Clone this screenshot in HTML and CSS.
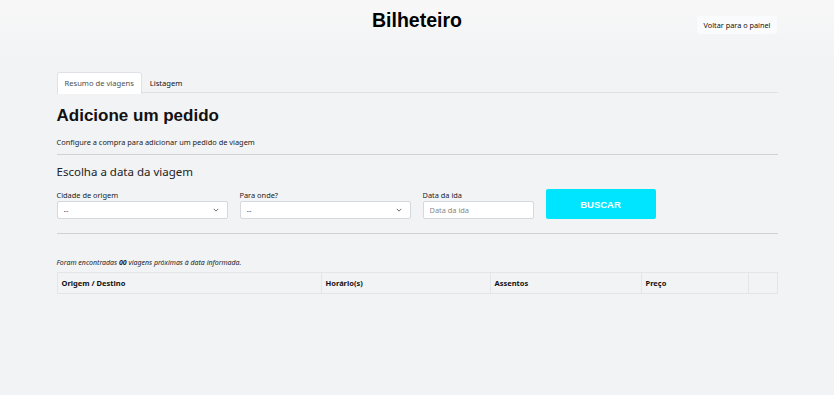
FILE: index.html
```html
<!DOCTYPE html>
<html lang="pt-BR">
<head>
  <meta charset="UTF-8" />
  <meta name="viewport" content="width=device-width, initial-scale=1.0" />
  <title>Bilheteiro</title>
  <link rel="stylesheet" href="styles.css">
</head>
<body>
  <header class="topo">
    <h1 class="marca">Bilheteiro</h1>
    <a class="voltar" href="#">Voltar para o painel</a>
  </header>

  <main class="container">
    <nav class="abas">
      <a class="aba ativa" href="#">Resumo de viagens</a>
      <a class="aba" href="#">Listagem</a>
    </nav>

    <h2 class="titulo">Adicione um pedido</h2>
    <p class="descricao">Configure a compra para adicionar um pedido de viagem</p>
    <hr class="divisor" />

    <h3 class="subtitulo">Escolha a data da viagem</h3>
    <form class="busca">
      <label class="campo campo-cidade">
        <span>Cidade de origem</span>
        <select><option>--</option></select>
      </label>
      <label class="campo campo-cidade">
        <span>Para onde?</span>
        <select><option>--</option></select>
      </label>
      <label class="campo campo-data">
        <span>Data da ida</span>
        <input type="text" placeholder="Data da ida" />
      </label>
      <button type="submit" class="buscar">BUSCAR</button>
    </form>
    <hr class="divisor divisor-busca" />

    <p class="resultado">Foram encontradas <b>00</b> viagens próximas à data informada.</p>
    <table class="viagens">
      <thead>
        <tr>
          <th class="col-origem">Origem / Destino</th>
          <th class="col-horario">Horário(s)</th>
          <th class="col-assentos">Assentos</th>
          <th class="col-preco">Preço</th>
          <th class="col-acao"></th>
        </tr>
      </thead>
    </table>
  </main>
</body>
</html>
```

FILE: styles.css
```css
body {
  margin: 0;
  font-family: "Noto Sans", "Open Sans", sans-serif;
  color: #212529;
  background: #f2f3f5;
}
.topo {
  position: relative;
  height: 60px;
  background: linear-gradient(#f8f8f8, #f2f3f5);
  text-align: center;
}
.marca {
  margin: 0;
  padding-top: 9px;
  font-family: "Liberation Sans", Arial, sans-serif;
  font-size: 19.5px;
  font-weight: bold;
  color: #000;
}
.voltar {
  position: absolute;
  top: 16px;
  left: 697px;
  width: 80px;
  height: 18px;
  line-height: 18px;
  background: #fafbfc;
  font-size: 7.3px;
  color: #111;
  text-decoration: none;
  border-radius: 2px;
}
.container {
  width: 721px;
  margin: 0 auto;
  padding-top: 12px;
}
.abas {
  display: flex;
  border-bottom: 1px solid #dee2e6;
  height: 20px;
}
.aba {
  display: block;
  padding: 0 7px;
  height: 20px;
  line-height: 20px;
  font-size: 7.6px;
  color: #111;
  text-decoration: none;
  border: 1px solid transparent;
  border-bottom: 0;
  border-radius: 3px 3px 0 0;
}
.aba.ativa {
  background: #fff;
  color: #495057;
  border-color: #dee2e6;
  height: 21px;
}
.titulo {
  margin: 13px 0 0;
  font-family: "Liberation Sans", Arial, sans-serif;
  font-size: 17px;
  font-weight: bold;
  color: #111;
}
.descricao {
  margin: 11px 0 0;
  font-size: 7.4px;
  color: #222;
}
.divisor {
  margin: 7px 0 0;
  border: 0;
  border-top: 1px solid #cfd2d6;
}
.subtitulo {
  margin: 9px 0 0;
  font-size: 11.5px;
  font-weight: normal;
  color: #222;
}
.busca {
  display: flex;
  align-items: flex-end;
  gap: 12px;
  margin-top: 10px;
}
.campo {
  display: flex;
  flex-direction: column;
  font-size: 7.4px;
  color: #222;
}
.campo span {
  margin-bottom: 1px;
}
.campo-cidade {
  width: 171px;
}
.campo-data {
  width: 111px;
}
.campo select,
.campo input {
  box-sizing: border-box;
  height: 18px;
  border: 1px solid #d5d8dc;
  border-radius: 2px;
  background: #fff;
  font-family: inherit;
  font-size: 7.4px;
  color: #333;
  padding: 0 6px;
}
.campo select {
  appearance: none;
  background-image: url("data:image/svg+xml,%3Csvg xmlns='http://www.w3.org/2000/svg' viewBox='0 0 16 16'%3E%3Cpath fill='none' stroke='%23343a40' stroke-width='2' d='M2 5l6 6 6-6'/%3E%3C/svg%3E");
  background-repeat: no-repeat;
  background-position: right 7px center;
  background-size: 8px 6px;
}
.campo input::placeholder {
  color: #888;
}
.buscar {
  width: 110px;
  height: 30px;
  border: 0;
  border-radius: 2px;
  background: #00e5ff;
  color: #fff;
  font-family: "Liberation Sans", Arial, sans-serif;
  font-size: 9.5px;
  font-weight: bold;
}
.divisor-busca {
  margin-top: 14px;
}
.resultado {
  margin: 24px 0 0;
  font-size: 7px;
  font-style: italic;
  color: #222;
}
.viagens {
  width: 100%;
  margin-top: 5px;
  border-collapse: collapse;
  font-size: 7.5px;
}
.viagens th {
  height: 20px;
  padding: 0 4px;
  text-align: left;
  font-weight: bold;
  color: #111;
  border: 1px solid #e3e5e8;
}
.col-origem { width: 255px; }
.col-horario { width: 160px; }
.col-assentos { width: 142px; }
.col-preco { width: 98px; }
```
